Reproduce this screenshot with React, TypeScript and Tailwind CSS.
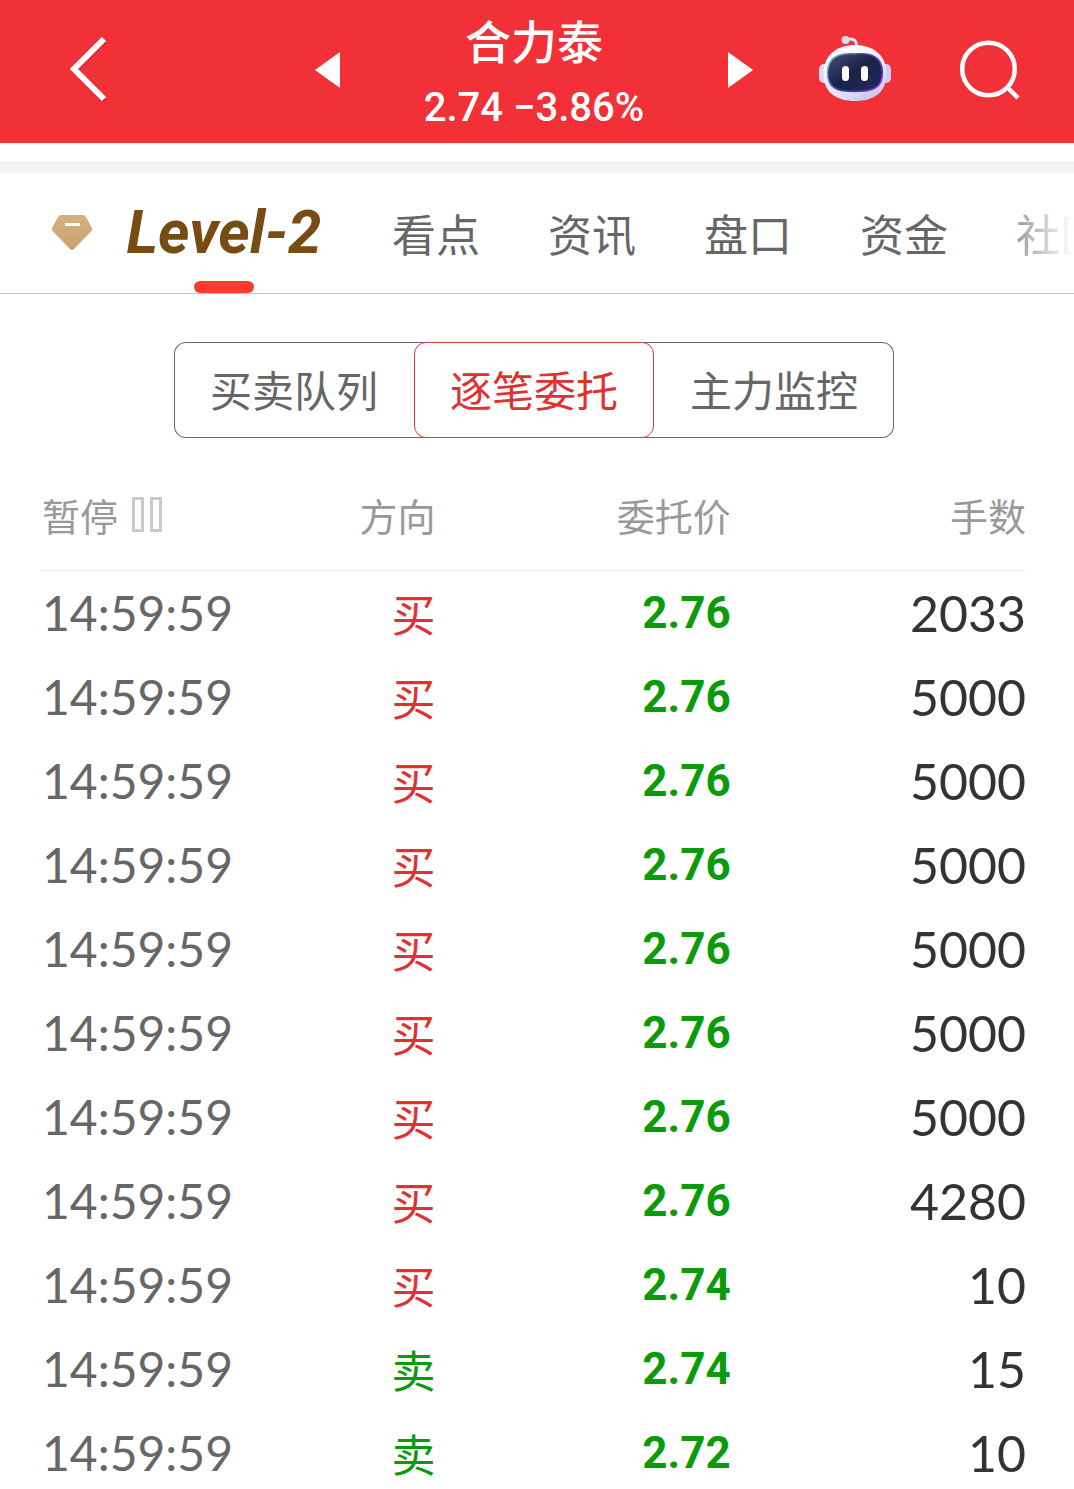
import React, { useState } from "react";
import clsx from "clsx";

const tabs = ["看点", "资讯", "盘口", "资金", "社区"];
const views = ["买卖队列", "逐笔委托", "主力监控"];

const orders = [
  { time: "14:59:59", side: "买", price: "2.76", lots: 2033 },
  { time: "14:59:59", side: "买", price: "2.76", lots: 5000 },
  { time: "14:59:59", side: "买", price: "2.76", lots: 5000 },
  { time: "14:59:59", side: "买", price: "2.76", lots: 5000 },
  { time: "14:59:59", side: "买", price: "2.76", lots: 5000 },
  { time: "14:59:59", side: "买", price: "2.76", lots: 5000 },
  { time: "14:59:59", side: "买", price: "2.76", lots: 5000 },
  { time: "14:59:59", side: "买", price: "2.76", lots: 4280 },
  { time: "14:59:59", side: "买", price: "2.74", lots: 10 },
  { time: "14:59:59", side: "卖", price: "2.74", lots: 15 },
  { time: "14:59:59", side: "卖", price: "2.72", lots: 10 },
];

function BackIcon() {
  return (
    <svg width="60" height="72" viewBox="0 0 60 72" fill="none">
      <path d="M57 7 27 37 57 67" stroke="#8f1d22" strokeOpacity="0.3" strokeWidth="5" />
      <path d="M56 5 26 35 56 65" stroke="#fff" strokeWidth="6" />
    </svg>
  );
}

function RobotIcon() {
  return (
    <svg width="72" height="68" viewBox="0 0 72 68" fill="none">
      <defs>
        <linearGradient id="shell" x1="20" y1="10" x2="50" y2="68" gradientUnits="userSpaceOnUse">
          <stop stopColor="#ffffff" />
          <stop offset="0.6" stopColor="#e9e6f8" />
          <stop offset="1" stopColor="#c6c2ea" />
        </linearGradient>
        <linearGradient id="rim" x1="8" y1="20" x2="62" y2="56" gradientUnits="userSpaceOnUse">
          <stop stopColor="#7fd6e8" />
          <stop offset="0.45" stopColor="#3b3a9c" />
          <stop offset="1" stopColor="#8b3df0" />
        </linearGradient>
        <linearGradient id="screen" x1="20" y1="20" x2="45" y2="56" gradientUnits="userSpaceOnUse">
          <stop stopColor="#3a4468" />
          <stop offset="0.5" stopColor="#1a2347" />
          <stop offset="1" stopColor="#1e2a55" />
        </linearGradient>
      </defs>
      <path d="M27 3.500C34 2 38 4 37.500 11" stroke="#e4dff5" strokeWidth="3" />
      <circle cx="26.500" cy="4" r="4" fill="#dcdaf3" />
      <rect x="0" y="28" width="12" height="19" rx="5" fill="#dcd9f4" />
      <rect x="60" y="28" width="12" height="19" rx="5" fill="#cfcbef" />
      <path
        d="M36 9C53 9 67 18 67.500 37C68 57 54 65 36 65C18 65 4 57 4.500 37C5 18 19 9 36 9Z"
        fill="url(#shell)"
      />
      <path
        d="M36 18C53 17 63 21 63.500 36C64 52 54 55.500 36 55.500C18 55.500 8 52 8.500 36C9 21 19 17 36 18Z"
        fill="url(#screen)"
        stroke="url(#rim)"
        strokeWidth="1.500"
      />
      <rect x="23" y="30" width="7" height="15" rx="3.500" fill="#fff" />
      <rect x="42" y="30" width="7" height="15" rx="3.500" fill="#fff" />
    </svg>
  );
}

function SearchIcon() {
  return (
    <svg width="60" height="60" viewBox="0 0 60 60" fill="none" stroke="#fff" strokeWidth="4.500">
      <circle cx="28.500" cy="29" r="26.300" />
      <path d="M47 47 58 58" />
    </svg>
  );
}

function DiamondIcon() {
  return (
    <svg width="44" height="40" viewBox="0 0 44 40" fill="none" className="shrink-0">
      <defs>
        <linearGradient id="gem" x1="22" y1="2" x2="22" y2="38" gradientUnits="userSpaceOnUse">
          <stop stopColor="#d3b083" />
          <stop offset="1" stopColor="#cba26c" />
        </linearGradient>
      </defs>
      <path
        d="M11 2H33Q35 2 36 4L42 15Q42.500 17 41.500 18L24 36Q22 38 20 36L2.500 18Q1.500 17 2 15L8 4Q9 2 11 2Z"
        fill="url(#gem)"
      />
      <rect x="15" y="10" width="15" height="3" fill="#fff" />
    </svg>
  );
}

export default function App() {
  const [tab, setTab] = useState("Level-2");
  const [view, setView] = useState("逐笔委托");

  return (
    <div className="bg-white font-['Noto_Sans_CJK_SC',sans-serif] text-[#666666]">
      {/* Top bar */}
      <header className="grid h-[143px] grid-cols-[1fr_auto_1fr] items-center bg-[#f13037] pb-1 pl-12 pr-[54px] text-white">
        <button aria-label="返回" className="justify-self-start">
          <BackIcon />
        </button>
        <div className="flex w-[438px] items-center justify-between">
          <button aria-label="上一只">
            <svg width="25" height="36" viewBox="0 0 25 36" fill="#fff">
              <path d="M25 0V36L0 18Z" />
            </svg>
          </button>
          <div className="text-center">
            <h1 className="text-[46px] font-medium leading-[76px]">合力泰</h1>
            <p className="font-[Roboto,sans-serif] text-[40px] font-medium leading-[62px]">2.74 −3.86%</p>
          </div>
          <button aria-label="下一只">
            <svg width="25" height="36" viewBox="0 0 25 36" fill="#fff">
              <path d="M0 0V36L25 18Z" />
            </svg>
          </button>
        </div>
        <div className="flex items-center gap-[69px] justify-self-end">
          <button aria-label="智能助手">
            <RobotIcon />
          </button>
          <button aria-label="搜索">
            <SearchIcon />
          </button>
        </div>
      </header>

      <div className="mt-[18px] h-3 bg-[#f4f4f4]" />

      {/* Tabs */}
      <nav className="relative flex h-[121px] items-stretch overflow-hidden border-b border-[#c4c4c4] pl-[50px]">
        <div className="flex items-center gap-[30px]">
          <DiamondIcon />
          <button
            onClick={() => setTab("Level-2")}
            className="relative h-full w-[200px] whitespace-nowrap font-[Roboto,sans-serif] text-[60px] font-bold italic text-[#764c12]"
          >
            Level-2
            {tab === "Level-2" && (
              <span className="absolute bottom-0 left-1/2 h-3 w-[60px] -translate-x-1/2 rounded-full bg-[#fb3a32]" />
            )}
          </button>
        </div>
        <div className="ml-[68px] flex gap-[68px]">
          {tabs.map((name) => (
            <button
              key={name}
              onClick={() => setTab(name)}
              className="relative h-full shrink-0 whitespace-nowrap text-[44px]"
            >
              {name}
              {tab === name && (
                <span className="absolute bottom-0 left-1/2 h-3 w-[60px] -translate-x-1/2 rounded-full bg-[#fb3a32]" />
              )}
            </button>
          ))}
        </div>
        <div className="pointer-events-none absolute inset-y-0 right-0 w-[90px] bg-gradient-to-r from-transparent to-white" />
      </nav>

      <main className="pl-[42px] pr-12">
        {/* View switch */}
        <div className="mx-auto mt-12 grid h-24 max-w-[720px] grid-cols-3 rounded-xl bg-white ring-1 ring-inset ring-[#666666]">
          {views.map((name) => (
            <button
              key={name}
              onClick={() => setView(name)}
              className={clsx(
                "rounded-xl border pb-1 text-[42px]",
                view === name ? "border-[#d93a3a] bg-white text-[#e03131]" : "border-transparent"
              )}
            >
              {name}
            </button>
          ))}
        </div>

        {/* Orders */}
        <table className="mt-6 w-full table-fixed">
          <thead>
            <tr className="h-[108px] border-b border-[#ececec] text-[38px] text-[#999999]">
              <th className="w-[20%] pb-0.5 text-left font-normal">
                <button className="flex items-center gap-3">
                  暂停
                  <svg width="32" height="36" viewBox="0 0 32 36" fill="none" stroke="#cacaca" strokeWidth="3">
                    <rect x="3.500" y="1.500" width="9" height="32" />
                    <rect x="21.500" y="1.500" width="9" height="32" />
                  </svg>
                </button>
              </th>
              <th className="w-[20%] pb-0.5 text-right font-normal">方向</th>
              <th className="w-[30%] pb-0.5 text-right font-normal">委托价</th>
              <th className="w-[30%] pb-0.5 text-right font-normal">手数</th>
            </tr>
          </thead>
          <tbody>
            {orders.map((order, i) => (
              <tr key={i} className="h-[84px] leading-[84px]">
                <td className="whitespace-nowrap font-[Lato,sans-serif] text-[48px]">{order.time}</td>
                <td
                  className={clsx(
                    "text-right text-[44px]",
                    order.side === "买" ? "text-[#e03131]" : "text-[#0a9a0a]"
                  )}
                >
                  {order.side}
                </td>
                <td className="text-right font-[Roboto,sans-serif] text-[44px] font-bold text-[#0a9a0a]">
                  {order.price}
                </td>
                <td className="text-right font-[Lato,sans-serif] text-[50px] text-[#333333]">{order.lots}</td>
              </tr>
            ))}
          </tbody>
        </table>
      </main>
    </div>
  );
}
